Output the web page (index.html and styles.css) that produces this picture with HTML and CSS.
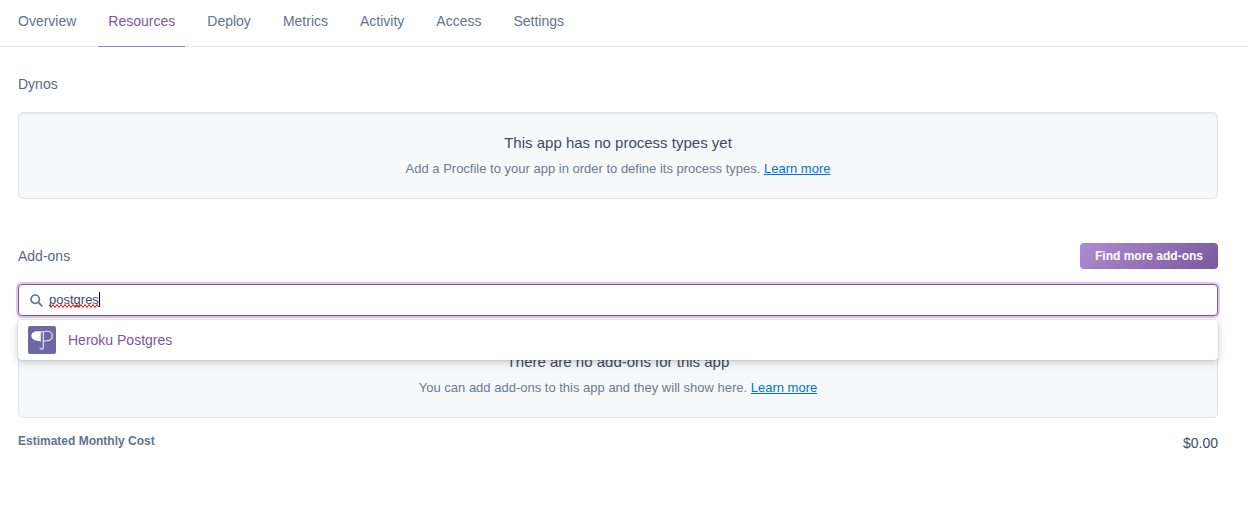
FILE: index.html
```html
<!DOCTYPE html>
<html lang="en">
<head>
<meta charset="utf-8">
<title>Resources</title>
<link rel="stylesheet" href="styles.css">
</head>
<body>
<nav class="tabs">
  <a class="tab" href="#overview">Overview</a>
  <a class="tab tab-active" href="#resources" aria-current="page">Resources</a>
  <a class="tab" href="#deploy">Deploy</a>
  <a class="tab" href="#metrics">Metrics</a>
  <a class="tab" href="#activity">Activity</a>
  <a class="tab" href="#access">Access</a>
  <a class="tab" href="#settings">Settings</a>
</nav>
<main class="content">
  <section class="dynos">
    <h2 class="section-title">Dynos</h2>
    <div class="well">
      <p class="well-title">This app has no process types yet</p>
      <p class="well-text">Add a Procfile to your app in order to define its process types. <a class="link" href="#procfile">Learn more</a></p>
    </div>
  </section>
  <section class="addons">
    <header class="addons-header">
      <h2 class="section-title">Add-ons</h2>
      <button class="button" type="button">Find more add-ons</button>
    </header>
    <div class="search">
      <label class="search-box">
        <svg class="search-icon" viewBox="0 0 13 13" aria-hidden="true"><circle cx="5.200" cy="5.200" r="4.200"/><path d="M8.400 8.400l3.400 3.400"/></svg>
        <input class="search-input" type="text" value="postgres" aria-label="Search add-ons" spellcheck="false">
        <svg class="squiggle" viewBox="0 0 50 4" aria-hidden="true"><path d="M0 .5l2 3 2-3 2 3 2-3 2 3 2-3 2 3 2-3 2 3 2-3 2 3 2-3 2 3 2-3 2 3 2-3 2 3 2-3 2 3 2-3 2 3 2-3 2 3 2-3 2 3"/></svg>
        <span class="caret"></span>
      </label>
      <div class="menu">
        <a class="option" href="#heroku-postgres">
          <svg class="option-icon" viewBox="0 0 28 28" aria-hidden="true">
            <rect width="28" height="28" rx="2" fill="#6f67a3"/>
            <path d="M12.800 5.600C7.500 4.200 3.300 6.200 3.400 9.700c.1 2.800 2.500 4.600 6 5 1.400.2 2.400.4 3.400 1z" fill="#fff"/>
            <path d="M12.800 5.600c1 .3 1.700.5 2.500.4 1.200-.6 2.400-.8 3.900-.7 3.200.2 5.100 2 5.100 4.400 0 3-2.500 4.900-5.600 5.100-1.200.1-2.200.3-3 .8M15.300 6v15c0 1.500-.7 2.100-1.700 2.100s-1.600-.5-1.700-1.400" fill="none" stroke="#eceaf5" stroke-width="1.100"/>
          </svg>
          <span class="option-name">Heroku Postgres</span>
        </a>
      </div>
    </div>
    <div class="well">
      <p class="well-title">There are no add-ons for this app</p>
      <p class="well-text">You can add add-ons to this app and they will show here. <a class="link" href="#addons">Learn more</a></p>
    </div>
    <footer class="cost">
      <strong class="cost-label">Estimated Monthly Cost</strong>
      <span class="cost-value">$0.00</span>
    </footer>
  </section>
</main>
</body>
</html>
```
FILE: styles.css
```css
* { box-sizing: border-box; }

body {
  margin: 0;
  background: #fff;
  color: #596981;
  font: 14px/20px "Liberation Sans", Arial, sans-serif;
}

.tabs {
  display: flex;
  gap: 12px;
  padding: 0 8px;
  border-bottom: 1px solid #e3e8ee;
}

.tab {
  margin-bottom: -1px;
  padding: 11px 10px 15px;
  border-bottom: 1px solid transparent;
  color: #62738d;
  text-decoration: none;
}

.tab-active {
  border-color: #9e7cc1;
  color: #79589f;
}

.content { padding: 27px 30px 0 18px; }

.section-title {
  margin: 0;
  color: #596981;
  font-size: 14px;
  font-weight: normal;
  line-height: 20px;
}

.well {
  padding: 20px;
  border: 1px solid #e0e4e9;
  border-radius: 5px;
  background: #f7f8fa;
  box-shadow: inset 0 1px 2px rgba(0, 0, 0, 0.06);
  text-align: center;
}

.dynos .well { margin-top: 18px; }

.well-title {
  margin: 0;
  color: #3f4b5f;
  font-size: 15px;
  line-height: 20px;
}

.well-text {
  margin: 7px 0 0;
  color: #6b7b93;
  font-size: 13px;
  line-height: 18px;
}

.link { color: #0070e0; }

.addons { margin-top: 44px; }

.addons-header {
  display: flex;
  align-items: center;
  justify-content: space-between;
}

.button {
  padding: 4px 15px;
  border: 0;
  border-radius: 4px;
  background: linear-gradient(135deg, #ad8dce, #79589f);
  color: #fff;
  font: bold 12px/18px "Liberation Sans", Arial, sans-serif;
}

.search {
  position: relative;
  margin: 15px 0;
}

.search-box {
  position: relative;
  display: flex;
  align-items: center;
  gap: 6px;
  height: 32px;
  padding: 0 11px;
  border: 1px solid #79589f;
  border-radius: 4px;
  background: #fff;
  box-shadow: 0 0 0 2px #d9c8ec;
}

.search-icon {
  width: 13px;
  height: 13px;
  fill: none;
  stroke: #62738d;
  stroke-width: 1.7;
  stroke-linecap: round;
}

.search-input {
  flex: 1;
  min-width: 0;
  padding: 0;
  border: 0;
  outline: 0;
  background: none;
  color: #3f4b5f;
  font: 13px/18px "Liberation Sans", Arial, sans-serif;
}

.squiggle {
  position: absolute;
  top: 19px;
  left: 30px;
  width: 50px;
  height: 4px;
  fill: none;
  stroke: #e00000;
}

.caret {
  position: absolute;
  top: 7px;
  left: 80px;
  width: 1px;
  height: 15px;
  background: #000;
}

.menu {
  position: absolute;
  top: 36px;
  right: 0;
  left: 0;
  border-radius: 4px;
  background: #fff;
  box-shadow: 0 0 0 1px rgba(0, 0, 0, 0.05), 0 2px 8px rgba(0, 0, 0, 0.2);
}

.option {
  display: flex;
  align-items: center;
  gap: 12px;
  padding: 6px 10px;
  color: #79589f;
  text-decoration: none;
}

.option-icon {
  width: 28px;
  height: 28px;
}

.cost {
  display: flex;
  justify-content: space-between;
  margin-top: 13px;
}

.cost-label {
  color: #62738d;
  font-size: 12px;
}

.cost-value {
  padding-top: 2px;
  color: #3f4b5f;
}
```
